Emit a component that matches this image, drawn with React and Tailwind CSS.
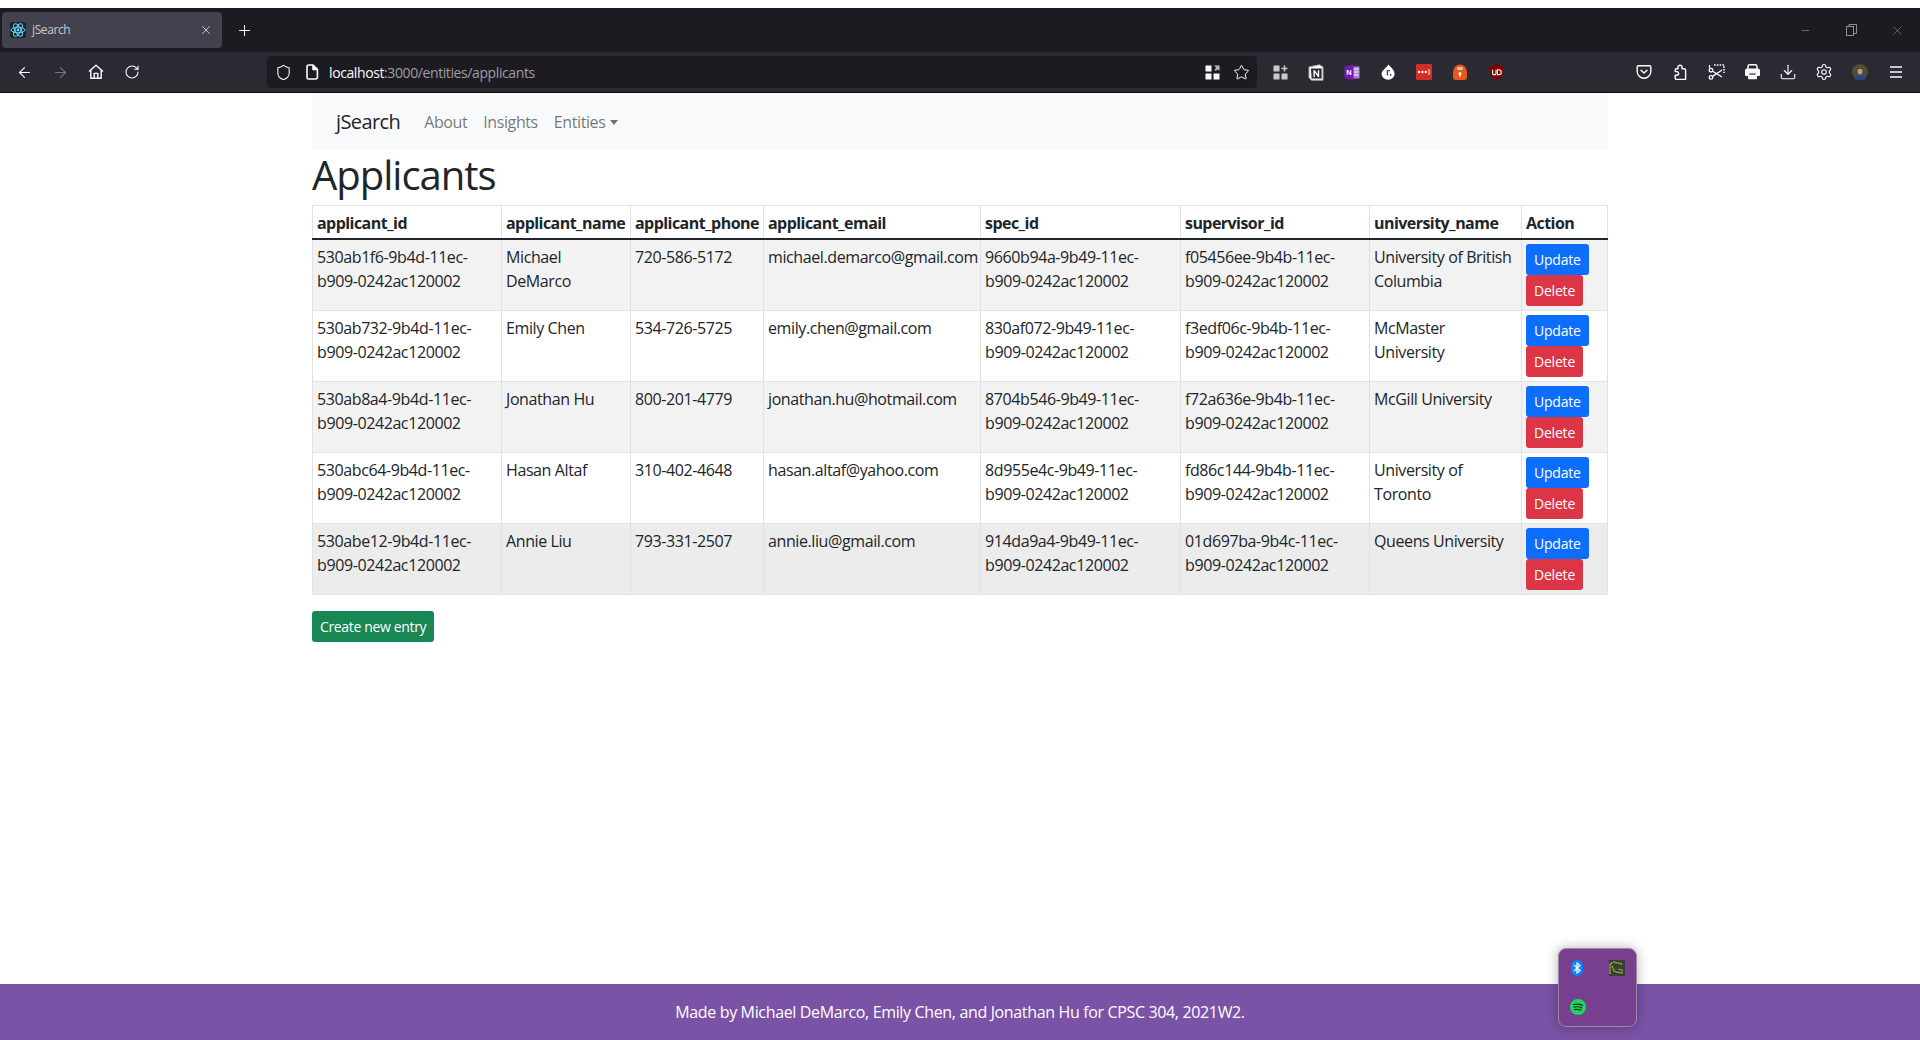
import React from 'react';
import { ArrowLeft, ArrowRight, RotateCw, Shield, X, Plus, Star, Download, Settings, Minus } from 'lucide-react';

const rows = [
    ['530ab1f6-9b4d-11ec-\nb909-0242ac120002', 'Michael DeMarco', '720-586-5172', 'michael.demarco@gmail.com', '9660b94a-9b49-11ec-\nb909-0242ac120002', 'f05456ee-9b4b-11ec-\nb909-0242ac120002', 'University of British Columbia'],
    ['530ab732-9b4d-11ec-\nb909-0242ac120002', 'Emily Chen', '534-726-5725', 'emily.chen@gmail.com', '830af072-9b49-11ec-\nb909-0242ac120002', 'f3edf06c-9b4b-11ec-\nb909-0242ac120002', 'McMaster University'],
    ['530ab8a4-9b4d-11ec-\nb909-0242ac120002', 'Jonathan Hu', '800-201-4779', 'jonathan.hu@hotmail.com', '8704b546-9b49-11ec-\nb909-0242ac120002', 'f72a636e-9b4b-11ec-\nb909-0242ac120002', 'McGill University'],
    ['530abc64-9b4d-11ec-\nb909-0242ac120002', 'Hasan Altaf', '310-402-4648', 'hasan.altaf@yahoo.com', '8d955e4c-9b49-11ec-\nb909-0242ac120002', 'fd86c144-9b4b-11ec-\nb909-0242ac120002', 'University of Toronto'],
    ['530abe12-9b4d-11ec-\nb909-0242ac120002', 'Annie Liu', '793-331-2507', 'annie.liu@gmail.com', '914da9a4-9b49-11ec-\nb909-0242ac120002', '01d697ba-9b4c-11ec-\nb909-0242ac120002', 'Queens University'],
];

const headers = ['applicant_id', 'applicant_name', 'applicant_phone', 'applicant_email', 'spec_id', 'supervisor_id', 'university_name', 'Action'];
const widths = ['w-[189px]', 'w-[129px]', 'w-[133px]', 'w-[217px]', 'w-[200px]', 'w-[189px]', 'w-[152px]', 'w-[86px]'];

function ToolButton({ children }) {
    return <div className="w-9 h-8 flex items-center justify-center shrink-0">{children}</div>;
}

function WindowButton({ children }) {
    return <div className="w-[46px] flex items-center justify-center">{children}</div>;
}

function ReactFavicon() {
    return (
        <svg width="16" height="16" viewBox="0 0 16 16">
            <rect width="16" height="16" rx="2" fill="#20232a" />
            <g fill="none" stroke="#61dafb" strokeWidth="1">
                <ellipse cx="8" cy="8" rx="7" ry="2.8" />
                <ellipse cx="8" cy="8" rx="7" ry="2.8" transform="rotate(60 8 8)" />
                <ellipse cx="8" cy="8" rx="7" ry="2.8" transform="rotate(120 8 8)" />
            </g>
            <circle cx="8" cy="8" r="1.4" fill="#61dafb" />
        </svg>
    );
}

function HomeIcon() {
    return (
        <svg width="16" height="16" viewBox="0 0 16 16" fill="none" stroke="#fbfbfe" strokeWidth="1.4" strokeLinejoin="round">
            <path d="M1 7.5 8 1.2l7 6.3" />
            <path d="M2.8 6.2v8.1h10.4V6.2" />
            <path d="M6.2 14.3V9.4h3.6v4.9" />
        </svg>
    );
}

function PageIcon() {
    return (
        <svg width="14" height="16" viewBox="0 0 14 16" fill="none" stroke="#fbfbfe" strokeWidth="1.6" strokeLinejoin="round">
            <path d="M2 2.6A1.6 1.6 0 0 1 3.6 1H8l4.4 4.4v8A1.6 1.6 0 0 1 10.8 15H3.6A1.6 1.6 0 0 1 2 13.4z" />
            <path d="M8 1v4.4h4.4" fill="#fbfbfe" />
        </svg>
    );
}

function TabsGridIcon() {
    return (
        <svg width="15" height="15" viewBox="0 0 15 15" fill="#fbfbfe">
            <rect x="0.5" y="0.5" width="6" height="6" />
            <rect x="0.5" y="8.5" width="6" height="6" />
            <rect x="8.5" y="8.5" width="6" height="6" />
            <path d="M9 0.5h5.5V6l-1.8-1.8-1.9 1.9-1.4-1.4 1.9-1.9z" fill="#b9b9bd" />
        </svg>
    );
}

function GridPlusIcon() {
    return (
        <svg width="15" height="15" viewBox="0 0 15 15" fill="#c8c8cb">
            <rect x="0.5" y="0.5" width="6" height="6" />
            <rect x="0.5" y="8.5" width="6" height="6" />
            <rect x="8.5" y="8.5" width="6" height="6" />
            <path d="M10.7 0.5h1.6v2.2h2.2v1.6h-2.2v2.2h-1.6V4.3H8.5V2.7h2.2z" />
        </svg>
    );
}

function NotionIcon() {
    return (
        <svg width="16" height="17" viewBox="0 0 16 17">
            <path d="M1 3 11.5.8 15 3v13.2H3.4L1 13.6z" fill="#fff" stroke="#aaa" strokeWidth="1" />
            <path d="M3 4.6h10.6v10H3.6z" fill="#2b2a33" />
            <path d="M5.4 13V6.2h1.4l3 4.4V6.2h1.4V13h-1.3L6.8 8.6V13z" fill="#fff" />
        </svg>
    );
}

function OneNoteIcon() {
    return (
        <svg width="16" height="17" viewBox="0 0 16 17">
            <rect x="7" y="2.5" width="8.5" height="12" rx="0.5" fill="#b083d6" />
            <path d="M9.5 5h5M9.5 8h5M9.5 11h5" stroke="#fff" strokeWidth="1" />
            <path d="M0.5 2.5 9.5 0.5v16l-9-2z" fill="#7719aa" />
            <text x="2.2" y="11.2" fontSize="7.5" fontWeight="700" fill="#fff" fontFamily="Liberation Sans, sans-serif">N</text>
        </svg>
    );
}

function DropIcon() {
    return (
        <svg width="14" height="16" viewBox="0 0 14 16">
            <path d="M7.6.6C9 3 13.6 6 13.6 10a6.4 5.6 0 0 1-13 0C.6 6.8 5 4 7.6.6z" fill="#fff" />
            <path d="M6.4 11.4V6.6h2.6" fill="none" stroke="#2a4d9c" strokeWidth="1.4" />
            <circle cx="9.6" cy="11" r="0.9" fill="#2a4d9c" />
        </svg>
    );
}

function LastPassIcon() {
    return (
        <svg width="16" height="16" viewBox="0 0 16 16">
            <rect width="16" height="16" rx="1" fill="#d32d27" />
            <circle cx="3" cy="8" r="1.2" fill="#fff" />
            <circle cx="6.4" cy="8" r="1.2" fill="#fff" />
            <circle cx="9.8" cy="8" r="1.2" fill="#fff" />
            <rect x="12.6" y="5" width="0.9" height="6" fill="#fff" />
        </svg>
    );
}

function OrangeLockIcon() {
    return (
        <svg width="16" height="17" viewBox="0 0 16 17">
            <path d="M1 8a7 7.6 0 0 1 14 0v5.6a2.4 2.4 0 0 1-2.4 2.4H3.4A2.4 2.4 0 0 1 1 13.6z" fill="#e9561f" />
            <rect x="5" y="3" width="6" height="3" rx="1" fill="#f6b79d" />
            <circle cx="8" cy="9.4" r="1.5" fill="#fff" />
            <rect x="7.3" y="9.8" width="1.4" height="3" fill="#fff" />
        </svg>
    );
}

function UBlockIcon() {
    return (
        <svg width="15" height="17" viewBox="0 0 15 17">
            <path d="M7.5.6 14.4 2.6c0 6.4-1.2 11-6.9 13.8C1.8 13.6.6 9 .6 2.6z" fill="#800000" />
            <path d="M3.6 5.8v3.4a1.7 1.7 0 0 0 3.4 0V5.8" fill="none" stroke="#fff" strokeWidth="1.1" />
            <path d="M8.4 5.8v5h1.4a2.5 2.5 0 0 0 0-5z" fill="none" stroke="#fff" strokeWidth="1.1" />
        </svg>
    );
}

function PocketIcon() {
    return (
        <svg width="16" height="16" viewBox="0 0 16 16" fill="none" stroke="#fbfbfe" strokeWidth="1.4" strokeLinecap="round" strokeLinejoin="round">
            <path d="M2.4 1.8h11.2a1.2 1.2 0 0 1 1.2 1.2v4.4a6.8 6.8 0 0 1-13.6 0V3a1.2 1.2 0 0 1 1.2-1.2z" />
            <path d="M5 6.2 8 9l3-2.8" />
        </svg>
    );
}

function PuzzleIcon() {
    return (
        <svg width="16" height="17" viewBox="0 0 16 17" fill="none" stroke="#fbfbfe" strokeWidth="1.4" strokeLinejoin="round">
            <path d="M8 1.2a2 2 0 0 1 2 2v1.6h2.2c.9 0 1.4.5 1.4 1.4v9.2H4.4a1.2 1.2 0 0 1-1.2-1.2v-3h1.6a1.8 1.8 0 0 0 0-3.6H3.2V6.2c0-.9.5-1.4 1.4-1.4H6V3.2a2 2 0 0 1 2-2z" />
        </svg>
    );
}

function ScissorsIcon() {
    return (
        <svg width="17" height="16" viewBox="0 0 17 16" fill="none" stroke="#fbfbfe" strokeWidth="1.3">
            <path d="M6 1h10v8" strokeDasharray="1.6 1.2" strokeWidth="1.6" />
            <path d="M1.5 1v3" strokeWidth="1.3" />
            <circle cx="3" cy="6.2" r="1.8" />
            <circle cx="3" cy="13.4" r="1.8" />
            <path d="M4.6 7.2 14 13M4.6 12.4 14 6" />
        </svg>
    );
}

function PrintIcon() {
    return (
        <svg width="15" height="16" viewBox="0 0 15 16">
            <path d="M3 5V2.4A1.6 1.6 0 0 1 4.6.8h5.8A1.6 1.6 0 0 1 12 2.4V5" fill="none" stroke="#fbfbfe" strokeWidth="1.5" />
            <path d="M2 4.6h11a2 2 0 0 1 2 2v4.4a1 1 0 0 1-1 1h-2v2.4a.8.8 0 0 1-.8.8H3.8a.8.8 0 0 1-.8-.8V12H1a1 1 0 0 1-1-1V6.6a2 2 0 0 1 2-2z" fill="#fbfbfe" />
            <rect x="4.4" y="9.4" width="6.2" height="1.2" fill="#2b2a33" />
        </svg>
    );
}

function AvatarIcon() {
    return (
        <svg width="16" height="16" viewBox="0 0 16 16">
            <circle cx="8" cy="8" r="8" fill="#4a4f38" />
            <path d="M2 14c1.4-2.4 3.4-3 6-3s4.6.6 6 3a8 8 0 0 1-12 0z" fill="#27477c" />
            <ellipse cx="8" cy="7" rx="2.4" ry="3.4" fill="#c89a7c" />
            <path d="M5.4 5.6C5.8 2.8 10.2 2.8 10.6 5.6L8 4.8z" fill="#4a3826" />
        </svg>
    );
}

function MenuIcon() {
    return (
        <svg width="14" height="12" viewBox="0 0 14 12" stroke="#fbfbfe" strokeWidth="1.4">
            <path d="M1 1h12M1 6h12M1 11h12" />
        </svg>
    );
}

function RestoreIcon() {
    return (
        <svg width="11" height="12" viewBox="0 0 11 12" fill="none" stroke="#8f8f94" strokeWidth="1">
            <rect x="0.5" y="2.5" width="7" height="9" />
            <path d="M3 2.5V.5h7.5v9H7.5" />
        </svg>
    );
}

function BrowserChrome() {
    return (
        <div className="shrink-0">
            <div className="h-2 bg-white" />
            <div className="h-11 bg-[#1c1b22] flex items-center pl-[2px]">
                <div className="w-[220px] h-9 bg-[#42414d] rounded flex items-center pl-2 pr-[9px]">
                    <ReactFavicon />
                    <span className="ml-[6px] text-xs text-[#c9c9cf]">jSearch</span>
                    <X className="ml-auto" size={14} color="#d8d8dc" strokeWidth={1.5} />
                </div>
                <Plus className="ml-[14px]" size={17} color="#fbfbfe" strokeWidth={1.5} />
                <div className="ml-auto flex items-center">
                    <WindowButton><Minus size={11} color="#8f8f94" strokeWidth={1.5} /></WindowButton>
                    <WindowButton><RestoreIcon /></WindowButton>
                    <WindowButton><X size={15} color="#8f8f94" strokeWidth={1} /></WindowButton>
                </div>
            </div>
            <div className="h-10 bg-[#2b2a33] flex items-center pl-[6px] pr-[6px] border-b border-[#0c0c0d] box-content">
                <ToolButton><ArrowLeft size={17} color="#fbfbfe" strokeWidth={1.5} /></ToolButton>
                <ToolButton><ArrowRight size={17} color="#77767e" strokeWidth={1.5} /></ToolButton>
                <ToolButton><HomeIcon /></ToolButton>
                <ToolButton><RotateCw size={16} color="#fbfbfe" strokeWidth={1.6} /></ToolButton>
                <div className="ml-[117px] w-[990px] h-8 bg-[#1c1b22] rounded flex items-center pl-[8px] pr-[3px]">
                    <Shield size={17} color="#fbfbfe" strokeWidth={1.5} />
                    <div className="ml-[13px]"><PageIcon /></div>
                    <span className="ml-[10px] mt-[1px] text-sm text-[#fbfbfe]">localhost<span className="text-[#9d9da3]">:3000/entities/applicants</span></span>
                    <div className="ml-auto flex items-center gap-[13px] pr-[4px]">
                        <TabsGridIcon />
                        <Star size={17} color="#fbfbfe" strokeWidth={1.4} />
                    </div>
                </div>
                <div className="ml-[5px] flex">
                    <ToolButton><GridPlusIcon /></ToolButton>
                    <ToolButton><NotionIcon /></ToolButton>
                    <ToolButton><OneNoteIcon /></ToolButton>
                    <ToolButton><DropIcon /></ToolButton>
                    <ToolButton><LastPassIcon /></ToolButton>
                    <ToolButton><OrangeLockIcon /></ToolButton>
                    <ToolButton><UBlockIcon /></ToolButton>
                </div>
                <div className="ml-auto flex">
                    <ToolButton><PocketIcon /></ToolButton>
                    <ToolButton><PuzzleIcon /></ToolButton>
                    <ToolButton><ScissorsIcon /></ToolButton>
                    <ToolButton><PrintIcon /></ToolButton>
                    <ToolButton><Download size={18} color="#fbfbfe" strokeWidth={1.5} /></ToolButton>
                    <ToolButton><Settings size={18} color="#fbfbfe" strokeWidth={1.5} /></ToolButton>
                    <ToolButton><AvatarIcon /></ToolButton>
                    <ToolButton><MenuIcon /></ToolButton>
                </div>
            </div>
        </div>
    );
}

function TrayPopup() {
    return (
        <div className="absolute left-[1558px] top-[948px] w-[79px] h-[79px] rounded-lg bg-[#773f8e] border border-[#9b8aa6] shadow-[0_0_12px_rgba(0,0,0,0.3)] grid grid-cols-2 grid-rows-2">
            <div className="pl-[12px] pt-[11px]">
                <svg width="12" height="16" viewBox="0 0 12 16">
                    <rect width="12" height="16" rx="6" fill="#0a84ff" />
                    <path d="M3 5l6 5.5-3 2.5V3l3 2.5L3 11" fill="none" stroke="#fff" strokeWidth="1.2" />
                </svg>
            </div>
            <div className="pl-[11px] pt-[11px]">
                <svg width="16" height="16" viewBox="0 0 16 16">
                    <rect width="16" height="16" fill="#3c3c3c" />
                    <path d="M1 14V4l4-2 8 2M3 6l2 5 3 1 5 1v-3l-4-1" fill="none" stroke="#8fd400" strokeWidth="1.3" strokeDasharray="2 .6" />
                </svg>
            </div>
            <div className="pl-[11px] pt-[11px]">
                <svg width="16" height="16" viewBox="0 0 16 16" fill="none">
                    <circle cx="8" cy="8" r="8" fill="#1ed760" />
                    <path d="M3.5 5.6c3-.9 6.4-.6 9 .8M4 8.2c2.5-.7 5.4-.5 7.7.7M4.5 10.6c2.1-.5 4.500-.4 6.400.6" stroke="#14321f" strokeWidth="1.2" strokeLinecap="round" />
                </svg>
            </div>
        </div>
    );
}

function rowClass(i) {
    if (i === 4) return 'bg-[#ececec]';
    return i % 2 === 0 ? 'bg-[#f2f2f2]' : 'bg-white';
}

export default function App() {
    return (
        <div className="relative h-[1040px] overflow-hidden flex flex-col bg-white text-[#212529] font-['Open_Sans',sans-serif] tracking-[-0.4px]">
            <BrowserChrome />

            <main className="w-[1320px] mx-auto px-3 flex-1">
                <nav className="h-[56px] bg-[#f8f9fa] flex items-center pl-6 pt-[2px]">
                    <span className="text-xl tracking-[-0.6px] mr-[24px]">jSearch</span>
                    <span className="text-[rgba(0,0,0,0.55)]">About</span>
                    <span className="ml-4 text-[rgba(0,0,0,0.55)]">Insights</span>
                    <span className="ml-4 text-[rgba(0,0,0,0.55)] flex items-center">
                        Entities
                        <span className="ml-[5px] w-0 h-0 border-x-[4px] border-x-transparent border-t-[5px] border-t-[rgba(0,0,0,0.55)]" />
                    </span>
                </nav>
                <h1 className="text-[40px] leading-[48px] tracking-[-1px] mt-[2px] mb-[6px]">Applicants</h1>
                <table className="w-[1295px] table-fixed border-collapse border border-[#dee2e6]">
                    <colgroup>
                        {widths.map((w, i) => <col key={i} className={w} />)}
                    </colgroup>
                    <thead>
                        <tr className="border-b-2 border-b-[#212529]">
                            {headers.map((h) => (
                                <th key={h} className="px-1 pt-[5px] pb-[3px] text-left font-bold tracking-[-0.55px] border-x border-[#dee2e6]">{h}</th>
                            ))}
                        </tr>
                    </thead>
                    <tbody>
                        {rows.map((row, i) => (
                            <tr key={row[0]} className={rowClass(i)}>
                                {row.map((cell, j) => (
                                    <td key={j} className="px-1 pt-[5px] pb-[3px] align-top whitespace-pre-line border border-[#dee2e6]">{cell}</td>
                                ))}
                                <td className="p-1 align-top border border-[#dee2e6]">
                                    <div className="flex flex-col items-start text-sm leading-[21px] tracking-[-0.2px]">
                                        <button className="bg-[#0d6efd] text-white rounded-[3px] px-2 py-[5px]">Update</button>
                                        <button className="bg-[#dc3545] text-white rounded-[3px] px-2 py-[5px]">Delete</button>
                                    </div>
                                </td>
                            </tr>
                        ))}
                    </tbody>
                </table>
                <button className="mt-4 bg-[#198754] text-white text-sm leading-[21px] tracking-[-0.35px] rounded-[3px] px-2 py-[5px]">Create new entry</button>
            </main>

            <footer className="h-14 shrink-0 bg-[#7a52a6] text-white tracking-[-0.35px] flex items-center justify-center">
                Made by Michael DeMarco, Emily Chen, and Jonathan Hu for CPSC 304, 2021W2.
            </footer>

            <TrayPopup />
        </div>
    );
}
